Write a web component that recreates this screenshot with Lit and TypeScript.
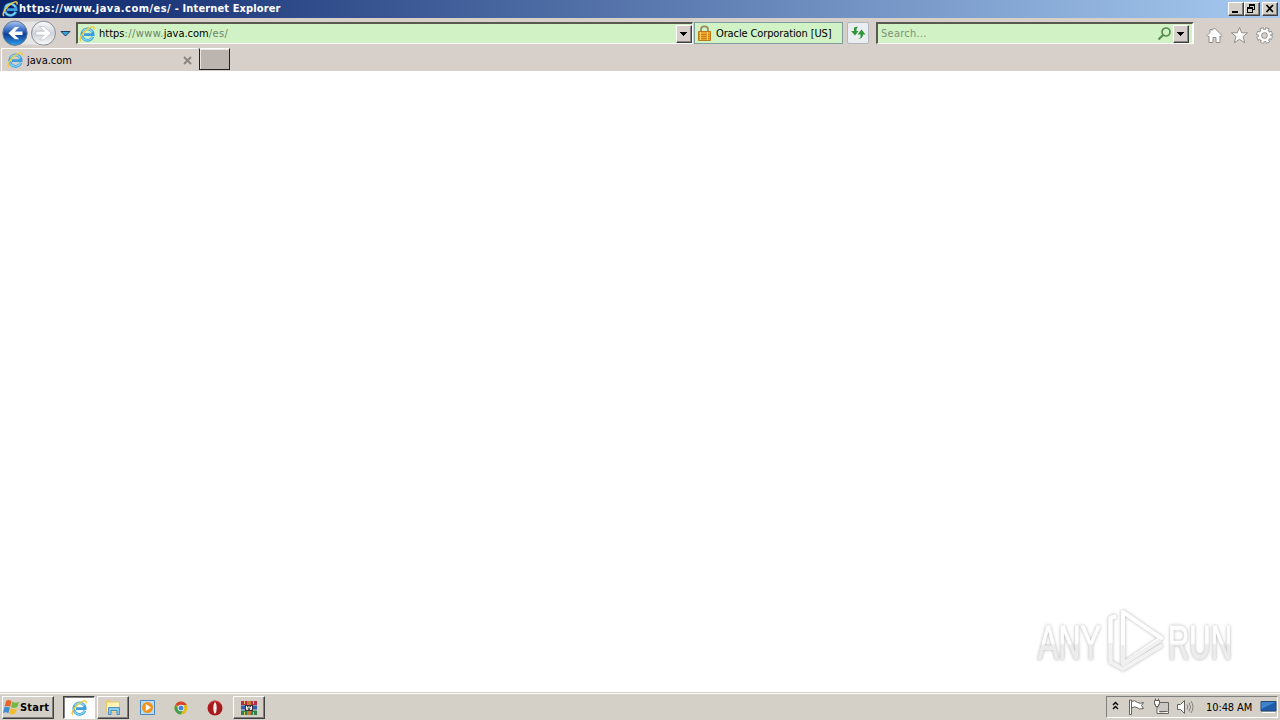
import { LitElement, html, css, svg } from 'lit';
import { customElement } from 'lit/decorators.js';

const ieLogo = (size: number) => html`<svg width="${size}" height="${size}" viewBox="0 0 16 16" fill="none">
  <path d="M13.8 10.8A5.7 5.7 0 1 1 14.2 8.7H5" stroke="#3a9fdc" stroke-width="2.7" />
  <path d="M13.4 10.9A5.7 5.7 0 0 1 3.2 11.2M3.4 5.8A5.7 5.7 0 0 1 13.3 6" stroke="#8cdcf9" stroke-width="1.1" />
  <path
    d="M2.2 14.9C-.4 14.1 2 8.6 6.6 4.6C10.6 1 15 -.2 15.1 1.8C15.1 2.5 15 3 14.8 3.5"
    stroke="#f3cd43"
    stroke-width="1.5"
  />
</svg>`;

const arrow = svg`<path d="M5.3 0L0 -5.3H-3.3L.2 -1.5H-6V1.5H.2L-3.3 5.3H0Z" />`;

@customElement('title-bar')
export class TitleBar extends LitElement {
  static styles = css`
    :host {
      display: flex;
      align-items: center;
      box-sizing: border-box;
      height: 18px;
      padding: 0 2px;
      background: linear-gradient(90deg, #0a246a, #a6caf0);
      color: #fff;
    }

    svg {
      display: block;
      flex: none;
    }

    .title {
      flex: 1;
      margin-left: 1px;
      font: bold 11px/18px 'DejaVu Sans Condensed', 'DejaVu Sans', sans-serif;
      letter-spacing: 0.12px;
      white-space: pre;
    }

    .title span {
      letter-spacing: 0.47px;
    }

    button {
      box-sizing: border-box;
      width: 16px;
      height: 14px;
      padding: 0;
      border: 1px solid;
      border-color: #fff #404040 #404040 #fff;
      background: #d4d0c8;
      box-shadow: inset -1px -1px #808080;
    }

    .close {
      margin-left: 2px;
    }
  `;

  render() {
    return html`${ieLogo(16)}
      <div class="title"><span>https://www.java.com/es/</span> - Internet Explorer</div>
      <button>
        <svg width="14" height="12" shape-rendering="crispEdges"><path d="M3 8h6v2H3z" /></svg>
      </button>
      <button>
        <svg width="14" height="12" shape-rendering="crispEdges">
          <path d="M4 1h6v6H8V6h1V3H5v1H4zM2 4h6v6H2zM3 6v3h4V6z" fill-rule="evenodd" />
        </svg>
      </button>
      <button class="close">
        <svg width="14" height="12" fill="none" stroke="#000" stroke-width="1.7">
          <path d="M3.5 2L10 9M10 2L3.5 9" />
        </svg>
      </button>`;
  }
}

@customElement('nav-bar')
export class NavBar extends LitElement {
  static styles = css`
    :host {
      display: flex;
      align-items: flex-start;
      box-sizing: border-box;
      height: 29px;
      padding: 2px 6px 0 2px;
      font: 11px/20px 'DejaVu Sans Condensed', 'DejaVu Sans', sans-serif;
    }

    svg {
      display: block;
      flex: none;
    }

    .field {
      display: flex;
      align-items: center;
      box-sizing: border-box;
      height: 22px;
      margin-top: 2px;
      border: solid;
      border-width: 2px 1px 1px 2px;
      border-color: #59594f #fff #fff #59594f;
      background: #d0f2c4;
    }

    .address {
      width: 617px;
      margin-left: 2px;
      padding-left: 1px;
    }

    .url {
      flex: 1;
      margin-left: 4px;
      color: #6f8269;
      letter-spacing: 0.4px;
    }

    b {
      font-weight: normal;
      color: #000;
      letter-spacing: 0;
    }

    .drop {
      box-sizing: border-box;
      width: 16px;
      height: 18px;
      padding: 0;
      border: 1px solid;
      border-color: #fff #404040 #404040 #fff;
      background: #d6cfcb;
      box-shadow: inset -1px -1px #8a8683;
    }

    .owner {
      display: flex;
      align-items: center;
      box-sizing: border-box;
      width: 149px;
      height: 22px;
      margin: 2px 0 0 1px;
      padding-left: 2px;
      border: 1px solid #7f9d9d;
      background: #d0f2c4;
      letter-spacing: -0.12px;
      white-space: nowrap;
    }

    .owner span {
      margin-left: 4px;
      padding-top: 2px;
    }

    .refresh {
      box-sizing: border-box;
      width: 22px;
      height: 22px;
      margin: 2px 0 0 4px;
      padding: 0;
      border: 1px solid #b3b7bd;
      border-radius: 2px;
      background: #eaeef0;
    }

    .search {
      width: 318px;
      margin-left: 7px;
      padding-right: 3px;
      border-right-width: 2px;
    }

    .search span {
      flex: 1;
      margin-left: 3px;
      color: #7d9277;
      letter-spacing: 0.25px;
    }

    .tools {
      display: flex;
      gap: 8px;
      margin: 7px 0 0 12px;
    }
  `;

  private drop = html`<button class="drop">
    <svg width="14" height="16" shape-rendering="crispEdges"><path d="M3 6h7v1h-1v1h-1v1h-1v1h-1v-1h-1v-1h-1v-1h-1z" /></svg>
  </button>`;

  render() {
    return html`<svg width="72" height="27" viewBox="0 0 72 27">
        <defs>
          <linearGradient id="blue" x2="0" y2="1">
            <stop stop-color="#b0c8ed" />
            <stop offset=".35" stop-color="#3c72c6" />
            <stop offset=".55" stop-color="#123e96" />
            <stop offset="1" stop-color="#2ba0ec" />
          </linearGradient>
          <linearGradient id="silver" x2="0" y2="1">
            <stop stop-color="#fcfcfd" />
            <stop offset=".5" stop-color="#cfd3da" />
            <stop offset="1" stop-color="#fafafa" />
          </linearGradient>
        </defs>
        <path d="M13 .5Q27 3 41 .5V26Q27 23 13 26Z" fill="#e7e4e4" />
        <circle cx="13" cy="13.2" r="12.2" fill="url(#blue)" stroke="#6b7890" />
        <circle cx="41.5" cy="13.2" r="12" fill="url(#silver)" stroke="#888d96" />
        <g transform="translate(13 13.2) scale(-1.25 1.15)" fill="#fff">${arrow}</g>
        <g transform="translate(42 13.2) scale(1.35 1.25)" fill="#fff" stroke="#b4b9c2" stroke-width=".5">
          ${arrow}
        </g>
        <path d="M59 11.5H68L63.5 16Z" fill="#3aa4d8" stroke="#173f65" />
      </svg>
      <div class="field address">
        ${ieLogo(16)}
        <span class="url"><b>https</b>://www.<b>java.com</b>/es/</span>
        ${this.drop}
      </div>
      <div class="owner">
        <svg width="15" height="17" viewBox="0 0 15 17">
          <path d="M4 7V4.2Q4 1.3 7.5 1.3T11 4.2V7" fill="none" stroke="#9b8c62" stroke-width="1.8" />
          <path d="M1.5 6.5h12v9h-12z" fill="#e9a52b" stroke="#b97918" />
          <path d="M2 9.5h11M2 11.5h11M2 13.5h11" stroke="#ca841b" />
          <path d="M3.5 7v8M10.5 7v8" stroke="#ffd064" />
        </svg>
        <span>Oracle Corporation [US]</span>
      </div>
      <button class="refresh">
        <svg width="20" height="20" viewBox="0 0 20 20" fill="#2e9638">
          <path d="M10 3.5L6 4.5V8H3L7 12.5L10.5 8H8.5V6Z" />
          <path d="M10 16L12.5 14.5V11.5H9.5L13.5 6.5L17.5 11.5H15Q15 15.5 10 16Z" />
        </svg>
      </button>
      <div class="field search">
        <span>Search...</span>
        <svg width="18" height="18" viewBox="0 0 18 18" fill="none" stroke="#578b4f">
          <circle cx="11" cy="7" r="4" stroke-width="1.7" />
          <path d="M8 10L3.5 14.5" stroke-width="2.2" />
        </svg>
        ${this.drop}
      </div>
      <div class="tools">
        <svg width="17" height="17" viewBox="0 0 17 17" fill="#fff" stroke="#918e8b">
          <path d="M8.5 1L16 8.5L14.8 9.7L14 9V15.5H10V10.5H7V15.5H3V9L2.2 9.7L1 8.5L4 5.5V2.5H6V3.5Z" />
        </svg>
        <svg width="17" height="17" viewBox="0 0 17 17" fill="#fff" stroke="#918e8b">
          <path d="M8.5 .5L10.7 5.8H16.5L12 9.6L13.7 15.7L8.5 12.3L3.3 15.7L5 9.6L.5 5.8H6.3Z" />
        </svg>
        <svg width="17" height="17" viewBox="-8.5 -8.5 17 17" fill="none">
          <circle r="6.3" stroke="#918e8b" stroke-width="4" stroke-dasharray="3.5 1.448" />
          <circle r="4.5" stroke="#918e8b" stroke-width="4.2" />
          <circle r="6.1" stroke="#fff" stroke-width="2.8" stroke-dasharray="2.2 2.591" stroke-dashoffset="-.6" />
          <circle r="4.5" stroke="#fff" stroke-width="2.6" />
        </svg>
      </div>`;
  }
}

@customElement('tab-strip')
export class TabStrip extends LitElement {
  static styles = css`
    :host {
      display: flex;
      box-sizing: border-box;
      height: 24px;
      padding-left: 1px;
      font: 11px/20px 'DejaVu Sans Condensed', 'DejaVu Sans', sans-serif;
    }

    svg {
      display: block;
      flex: none;
    }

    .tab {
      display: flex;
      align-items: center;
      box-sizing: border-box;
      width: 197px;
      height: 23px;
      margin-top: 1px;
      padding: 0 6px 0 5px;
      border-top: 1px solid #fff;
      border-left: 1px solid #fff;
    }

    .tab span {
      flex: 1;
      margin-left: 4px;
      padding-top: 2px;
    }

    .new-tab {
      box-sizing: border-box;
      width: 31px;
      height: 22px;
      margin: 1px 0 0 1px;
      border: 1px solid #202020;
      border-top-color: #fff;
      background: #bbb4af;
      box-shadow: inset 1px 1px #e9e5e2;
    }
  `;

  render() {
    return html`<div class="tab">
        ${ieLogo(16)}
        <span>java.com</span>
        <svg width="9" height="9" fill="none" stroke="#8b8581" stroke-width="1.9">
          <path d="M1 1L8 8M8 1L1 8" />
        </svg>
      </div>
      <div class="new-tab"></div>`;
  }
}

@customElement('task-bar')
export class TaskBar extends LitElement {
  static styles = css`
    :host {
      display: flex;
      align-items: flex-start;
      box-sizing: border-box;
      height: 28px;
      padding: 2px 2px 0;
      border-top: 1px solid #d4d0c8;
      background: #d4d0c8;
      box-shadow: inset 0 1px #fff;
      font: 11px/22px 'DejaVu Sans Condensed', 'DejaVu Sans', sans-serif;
    }

    svg {
      display: block;
      flex: none;
    }

    .button {
      display: flex;
      align-items: center;
      justify-content: center;
      box-sizing: border-box;
      width: 32px;
      height: 23px;
      margin-top: 1px;
      border: 1px solid transparent;
    }

    .raised {
      border-color: #fff #404040 #404040 #fff;
      box-shadow: inset -1px -1px #808080;
    }

    .active {
      border-color: #404040 #fff #fff #404040;
      background: #fff;
      box-shadow: inset 1px 1px #808080;
    }

    .start {
      justify-content: flex-start;
      width: 52px;
      margin-right: 9px;
      font-weight: bold;
      letter-spacing: 0.2px;
    }

    .apps {
      display: flex;
      flex: 1;
      gap: 2px;
    }

    .tray {
      display: flex;
      align-items: center;
      box-sizing: border-box;
      width: 172px;
      height: 22px;
      margin-top: 1px;
      padding-left: 4px;
      border: 1px solid;
      border-color: #808080 #fff #fff #808080;
    }

    .clock {
      flex: 1;
      margin-left: 12px;
      padding-top: 1px;
      letter-spacing: -0.1px;
      white-space: nowrap;
    }
  `;

  render() {
    return html`<div class="button raised start">
        <svg width="17" height="17" viewBox="0 0 17 17">
          <path d="M3.2 1.8Q6 .2 8.6 2.2L7.2 7.8Q4.5 6.2 1.6 7.5Z" fill="#e8642b" />
          <path d="M9.4 2.8Q12.3 4.5 16 2.7L14.4 8.1Q11 9.6 8 8.2Z" fill="#73b843" />
          <path d="M1.3 8.4Q4 7.1 6.9 8.8L5.4 14.2Q2.6 12.7 0 13.9Z" fill="#418dd2" />
          <path d="M7.7 9.3Q10.6 10.6 14 9.2L12.4 14.6Q9 15.9 6.2 14.7Z" fill="#f4bd2f" />
        </svg>
        Start
      </div>
      <div class="apps">
        <div class="button active">${ieLogo(16)}</div>
        <div class="button raised">
          <svg width="17" height="17" viewBox="0 0 17 17">
            <path d="M1 1.5h5l1 1h8v11H1z" fill="#eac766" />
            <path d="M2 3.5h12v9H2z" fill="#fff3b5" />
            <path d="M3.5 15.5V8.5H14.5V15.5H12V11.5H6V15.5Z" fill="#8acaf0" stroke="#4c91bf" />
          </svg>
        </div>
        <div class="button">
          <svg width="17" height="17" viewBox="0 0 17 17">
            <path d="M1.5 1.5h14v14h-14z" fill="#b9dcf5" stroke="#478ac5" />
            <circle cx="8.5" cy="8.5" r="5.5" fill="#f3921e" />
            <path d="M6.8 5L12 8.5L6.8 12Z" fill="#fff" />
          </svg>
        </div>
        <div class="button">
          <svg width="14" height="14" viewBox="-7 -7 14 14">
            <circle r="6.5" fill="#e1ba20" />
            <path d="M0 0L-5.6 -3.3A6.5 6.5 0 0 1 5.8 -3H0Z" fill="#d9432f" />
            <path d="M-5.6 -3.3A6.5 6.5 0 0 0 -.4 6.5L2.5 1.5L-2.5 1.5Z" fill="#40a052" />
            <circle r="3.2" fill="#fff" />
            <circle r="2.5" fill="#4286d5" />
          </svg>
        </div>
        <div class="button">
          <svg width="16" height="16" viewBox="0 0 16 16">
            <circle cx="8" cy="8" r="7.5" fill="#a91a1c" />
            <path d="M2 4.5A7 7 0 0 1 14 4.5" fill="none" stroke="#dc5550" />
            <ellipse cx="8" cy="8" rx="1.7" ry="5.7" fill="#f3eeee" />
          </svg>
        </div>
        <div class="button raised">
          <svg width="18" height="16" viewBox="0 0 18 16">
            <path d="M1 1h16v4H1z" fill="#b52d48" />
            <path d="M1 5.5h16v4H1z" fill="#315ea8" />
            <path d="M1 10.5h16V15H1z" fill="#31804d" />
            <path d="M7 1h4v14H7z" fill="#c27930" />
            <path d="M5 5h8v6H5z" fill="#382e39" />
            <path d="M6.5 6v3.5h1.3V7h2.4v2.5h1.3V6" fill="none" stroke="#fff" />
            <path d="M4.5 1v3M4.5 12v3M13.5 1v3M13.5 12v3" stroke="#e6c067" />
          </svg>
        </div>
      </div>
      <div class="tray">
        <svg width="9" height="14" viewBox="0 0 9 14" fill="none" stroke="#000" stroke-width="1.4">
          <path d="M2 5L4.5 2.5L7 5M2 9L4.5 6.5L7 9" />
        </svg>
        <svg width="74" height="18" viewBox="0 0 74 18" fill="#fff" stroke="#64615e">
          <path d="M9.5 2V16.5H11.5V2Z" />
          <path d="M11.5 3.5Q15 1.5 17.5 4.5Q20 6 23.5 4.5L21.5 7.5L23.5 10.5Q19 12 17 9.5Q14.5 8 11.5 10Z" />
          <path d="M37.5 4.5H48.5V13.5H37.5Z" fill="#cac7c3" />
          <path d="M40 15.5H48.5V13.5" />
          <path d="M34.5 2.5H39.5V6.5H38.5V8.5H35.5V6.5H34.5ZM35.5 .5V2.5M38.5 .5V2.5M37 8.5V15.5H40" />
          <path d="M57.5 6.5H60.5L64.5 2.5V15.5L60.5 11.5H57.5Z" />
          <path d="M67 6.5Q68.5 9 67 11.5M69 4.5Q72 9 69 13.5M71 3Q75 9 71 15" fill="none" stroke="#85827f" />
        </svg>
        <span class="clock">10:48 AM</span>
        <svg width="17" height="16" viewBox="0 0 17 16">
          <path d="M1 2.5h15v9.5H1z" fill="#1e5ca8" stroke="#274779" />
          <path d="M1.5 3h14L1.5 10z" fill="#3f83cc" />
          <path d="M2 13.5h13" stroke="#fff" />
        </svg>
      </div>`;
  }
}

@customElement('app-root')
export class AppRoot extends LitElement {
  static styles = css`
    :host {
      display: flex;
      flex-direction: column;
      width: 1280px;
      height: 720px;
      overflow: hidden;
      background: #d6cfca;
      color: #000;
    }

    main {
      display: flex;
      flex: 1;
      align-items: flex-end;
      justify-content: flex-end;
      padding: 0 48px 19px 0;
      background: #fff;
    }

    .watermark {
      font: 49px/66px 'Liberation Sans', sans-serif;
      filter: drop-shadow(0 0 1.5px #b0b0b0);
    }

    .watermark svg {
      display: block;
      overflow: visible;
    }

    .watermark text {
      fill: url(#fade);
      stroke: url(#fade);
      stroke-width: 1.2px;
    }
  `;

  render() {
    return html`<title-bar></title-bar>
      <nav-bar></nav-bar>
      <tab-strip></tab-strip>
      <main>
        <div class="watermark">
          <svg width="196" height="66" viewBox="0 0 196 66">
            <defs>
              <linearGradient id="fade" x2="0" y2="1">
                <stop offset=".52" stop-color="#fff" />
                <stop offset=".56" stop-color="#ececec" />
              </linearGradient>
            </defs>
            <text x="2" y="52" textLength="63" lengthAdjust="spacingAndGlyphs">ANY</text>
            <text x="132" y="52" textLength="64" lengthAdjust="spacingAndGlyphs">RUN</text>
            <g fill="none" stroke-width="4.2" stroke-linejoin="round">
              <path d="M80 9L74.5 11V55L87 62L126 38" stroke="#f2f2f2" />
              <path d="M80 9L74.5 11V36" stroke="#fff" />
              <path d="M87 5V57L125 31Z" stroke="#fff" />
              <path d="M87 38V57L125 33" stroke="#f0f0f0" />
            </g>
          </svg>
        </div>
      </main>
      <task-bar></task-bar>`;
  }
}
